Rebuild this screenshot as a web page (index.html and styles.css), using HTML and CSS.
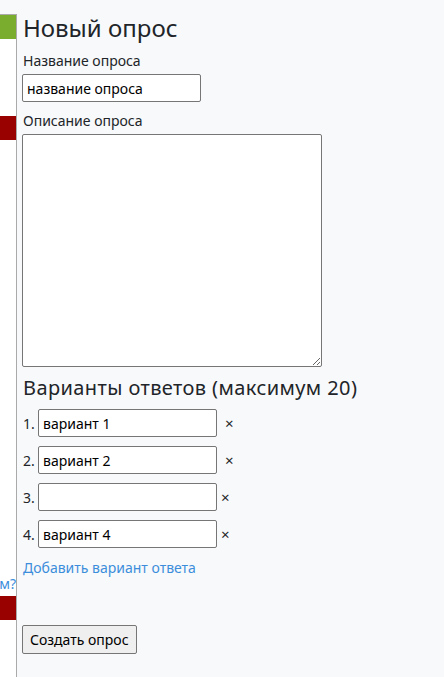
FILE: index.html
```html
<!DOCTYPE html>
<html lang="ru">
<head>
<meta charset="utf-8">
<title>Новый опрос</title>
<link rel="stylesheet" href="styles.css">
</head>
<body>
<div class="layout">
  <aside class="side">
    <div class="blk green"></div>
    <div class="blk red red1"></div>
    <div class="side-link"><span>м?</span></div>
    <div class="blk red red2"></div>
  </aside>
  <main class="main">
    <h1 class="title">Новый опрос</h1>
    <label class="lbl">Название опроса</label>
    <input class="inp name" type="text" value="название опроса">
    <label class="lbl lbl2">Описание опроса</label>
    <textarea class="area"></textarea>
    <h2 class="sub">Варианты ответов (максимум 20)</h2>
    <ol class="opts">
      <li class="opt"><span class="num">1.</span><input class="inp oinp" type="text" value="вариант 1"><span class="x xw">×</span></li>
      <li class="opt"><span class="num">2.</span><input class="inp oinp" type="text" value="вариант 2"><span class="x xw">×</span></li>
      <li class="opt"><span class="num">3.</span><input class="inp oinp" type="text" value=""><span class="x">×</span></li>
      <li class="opt"><span class="num">4.</span><input class="inp oinp" type="text" value="вариант 4"><span class="x">×</span></li>
    </ol>
    <a class="add" href="#">Добавить вариант ответа</a>
    <button class="btn" type="button">Создать опрос</button>
  </main>
</div>
</body>
</html>
```
FILE: styles.css
```css
html, body {
  margin: 0;
  padding: 0;
  background: #f8f9fa;
  font-family: "Noto Sans", "Open Sans", sans-serif;
  color: #212529;
}
.layout {
  display: flex;
  min-height: 677px;
}
.side {
  width: 16px;
  flex: 0 0 16px;
  margin-top: 14px;
  border-top: 1px solid #aaa;
  border-right: 1px solid #aaa;
  background: #fff;
  display: flex;
  flex-direction: column;
  overflow: hidden;
}
.blk { width: 16px; }
.green { background: #7aac2e; height: 24px; }
.red { background: #990000; height: 24px; }
.red1 { margin-top: 77px; }
.side-link {
  margin-top: 434px;
  font-size: 14px;
  line-height: 20px;
  color: #3c8edc;
  white-space: nowrap;
  width: 16px;
  display: flex;
  justify-content: flex-end;
}
.red2 { margin-top: 2px; }
.main {
  padding: 12px 0 0 5px;
  display: flex;
  flex-direction: column;
  align-items: flex-start;
}
.title {
  margin: 0 0 0 1px;
  font-size: 24px;
  font-weight: 400;
  line-height: 32px;
}
.lbl {
  font-size: 14px;
  line-height: 20px;
  margin: 7px 0 3px 1px;
}
.lbl2 { margin-top: 9px; }
.inp {
  font-family: inherit;
  font-size: 14px;
  color: #000;
  background: #fff;
  border: 1px solid #767676;
  border-radius: 2px;
  padding: 0 4px;
  height: 28px;
  box-sizing: border-box;
  outline: none;
}
.name { width: 179px; margin-top: 0; }
.area {
  width: 300px;
  height: 233px;
  box-sizing: border-box;
  border: 1px solid #767676;
  border-radius: 2px;
  background: #fff;
  margin: 0;
}
.sub {
  margin: 7px 0 0 1px;
  font-size: 20px;
  font-weight: 400;
  line-height: 28px;
  letter-spacing: 0.4px;
}
.opts {
  list-style: none;
  margin: 7px 0 0 1px;
  padding: 0;
  display: flex;
  flex-direction: column;
  gap: 9px;
}
.opt {
  display: flex;
  align-items: center;
  font-size: 14px;
}
.num { width: 15px; }
.oinp { width: 179px; }
.x {
  margin-left: 4px;
  font-size: 15px;
  color: #212529;
}
.xw { margin-left: 8px; }
.add {
  margin: 10px 0 0 1px;
  font-size: 14px;
  line-height: 20px;
  color: #3c8edc;
  text-decoration: none;
}
.btn {
  margin-top: 47px;
  font-family: inherit;
  font-size: 14px;
  height: 29px;
  padding: 0 7px;
  background: #efefef;
  border: 1px solid #767676;
  border-radius: 2px;
  color: #000;
}
```
